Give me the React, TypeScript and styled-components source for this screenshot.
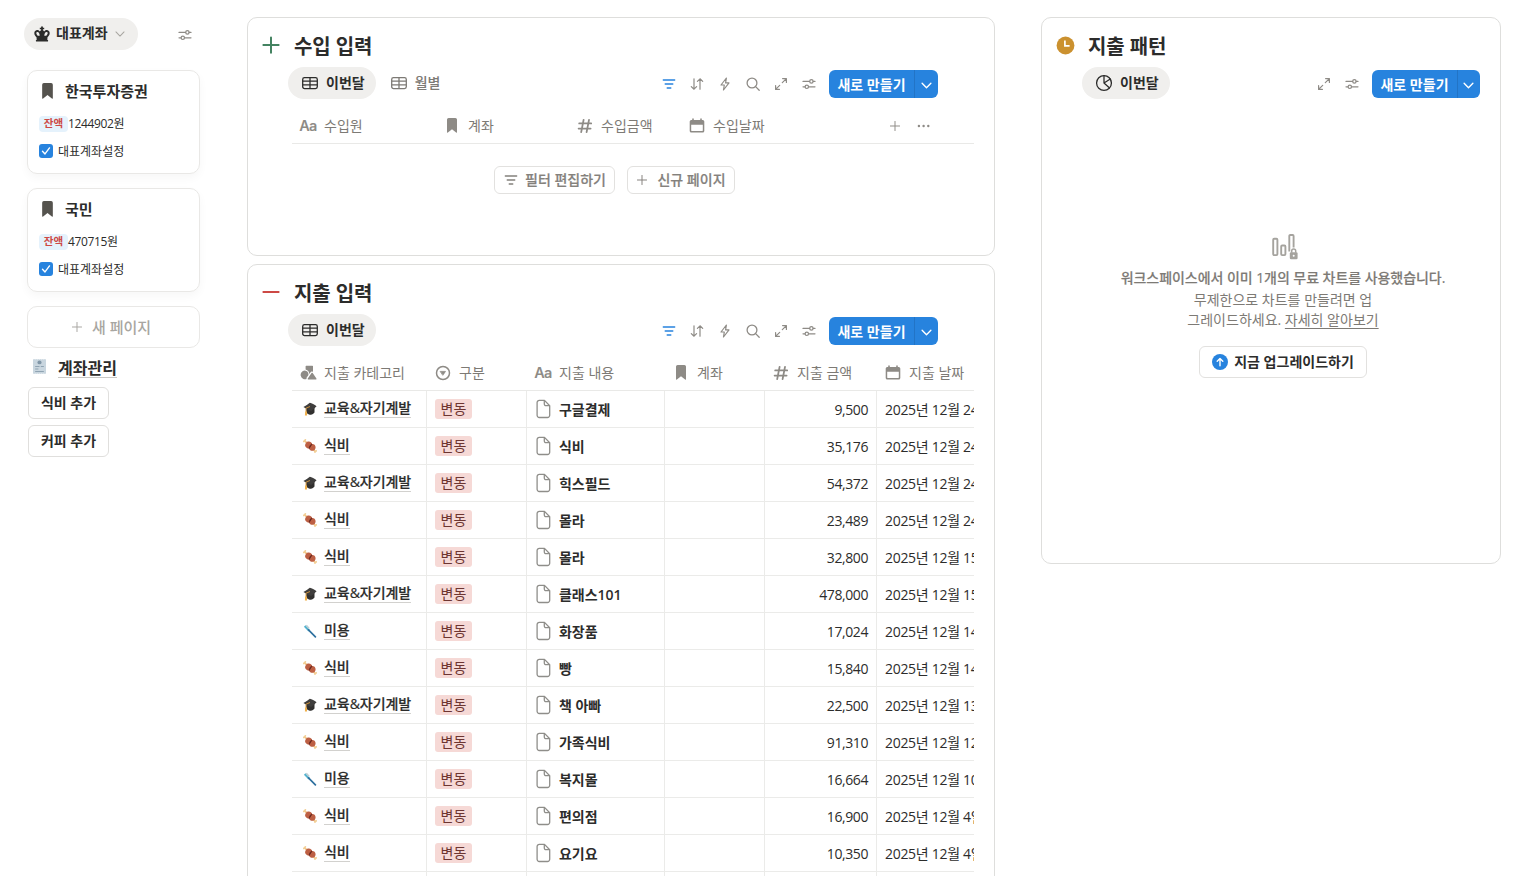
import React from 'react';
import styled, { createGlobalStyle } from 'styled-components';

const GlobalStyle = createGlobalStyle`
  * { box-sizing: border-box; }
  html, body { margin: 0; background: #fff; overflow: hidden; }
  body {
    font-family: "Open Sans", "Noto Sans CJK KR", sans-serif;
    font-size: 14px;
    line-height: 20px;
    color: #2c2c2b;
  }
  svg { display: block; flex: none; }
`;

const GREY = '#8e8b86';
const BLUE = '#2783de';

/* ---------- layout ---------- */

const Page = styled.div`
  display: flex;
  align-items: flex-start;
  width: 1525px;
  height: 876px;
  padding: 17px 24px 0;
  overflow: hidden;
`;

const Sidebar = styled.aside`
  width: 177px;
  margin-right: 46px;
  flex: none;
`;

const Center = styled.main`
  width: 748px;
  margin-right: 46px;
  flex: none;
`;

const Panel = styled.section<{ $h: number; $w?: number }>`
  width: ${(p) => (p.$w ? `${p.$w}px` : '100%')};
  height: ${(p) => p.$h}px;
  margin-bottom: 8px;
  border: 1px solid #dededc;
  border-radius: 10px;
  flex: none;
  overflow: hidden;
`;

const PanelTitle = styled.h2<{ $left: number }>`
  display: flex;
  align-items: center;
  gap: 13px;
  height: 49px;
  margin: 0;
  padding: 6px 0 0 ${(p) => p.$left}px;
  font-size: 20px;
  line-height: 26px;
  font-weight: 700;
  letter-spacing: -0.1px;
  span { padding-top: 3px; }
  svg { margin-bottom: 1px; }
`;

const Toolbar = styled.div<{ $right: number }>`
  display: flex;
  align-items: center;
  height: 32px;
  padding: 0 ${(p) => p.$right}px 0 40px;
`;

const Tab = styled.button<{ $active?: boolean }>`
  display: flex;
  align-items: center;
  gap: 7px;
  height: 32px;
  margin-right: 1px;
  padding: 0 11px 0 13px;
  border: 0;
  border-radius: 16px;
  background: ${(p) => (p.$active ? '#f0efed' : 'transparent')};
  color: ${(p) => (p.$active ? '#2c2c2b' : '#7d7a75')};
  font: ${(p) => (p.$active ? 600 : 500)} 14px/20px "Open Sans", "Noto Sans CJK KR", sans-serif;
`;

const Actions = styled.div`
  display: flex;
  align-items: center;
  gap: 12px;
  margin-left: auto;
  padding-top: 2px;
  color: ${GREY};
`;

const NewButton = styled.button`
  display: flex;
  align-items: center;
  height: 28px;
  padding: 0;
  border: 0;
  border-radius: 6px;
  background: ${BLUE};
  color: #fff;
  font: 600 14px/29px "Open Sans", "Noto Sans CJK KR", sans-serif;
  overflow: hidden;
`;

const NewLabel = styled.span`
  width: 86px;
  height: 28px;
  text-align: center;
  border-right: 1px solid #2274c6;
`;

const NewArrow = styled.span<{ $w: number }>`
  display: flex;
  justify-content: center;
  align-items: center;
  width: ${(p) => p.$w}px;
  height: 28px;
  padding: 2px 1px 0 0;
`;

/* ---------- table ---------- */

const TableBox = styled.div`
  width: 682px;
  margin: 9px 0 0 44px;
  overflow: hidden;
`;

const HeadRow = styled.div<{ $cols: string }>`
  display: grid;
  grid-template-columns: ${(p) => p.$cols};
  width: 720px;
  height: 36px;
  border-bottom: 1px solid #e9e9e7;
`;

const HeadCell = styled.div`
  display: flex;
  align-items: center;
  gap: 8px;
  padding: 0 0 0 8px;
  color: #7d7a75;
  white-space: nowrap;
  svg { color: ${GREY}; }
`;

const IconSlot = styled.span`
  display: flex;
  justify-content: center;
  width: 16px;
  flex: none;
`;

const EmojiSlot = styled(IconSlot)`
  width: 14px;
  margin-left: 3px;
`;

const Row = styled.div<{ $cols: string }>`
  display: grid;
  grid-template-columns: ${(p) => p.$cols};
  width: 720px;
  height: 37px;
  border-bottom: 1px solid #ebebe9;
`;

const Cell = styled.div`
  display: flex;
  align-items: center;
  padding: 0 8px;
  border-right: 1px solid #ebebe9;
  white-space: nowrap;
`;

const CategoryLink = styled.span`
  margin: 0 0 1px 7px;
  height: 19px;
  line-height: 18px;
  font-weight: 500;
  letter-spacing: -0.05px;
  -webkit-text-stroke: 0.2px #2c2c2b;
  border-bottom: 1px solid #d2d1ce;
`;

const Tag = styled.span`
  height: 20px;
  padding: 0 5.6px;
  border-radius: 3px;
  background: #f6d9d6;
  color: #6d3531;
  line-height: 19px;
`;

const PageName = styled.span`
  margin: 2px 0 0 7px;
  font-weight: 600;
  letter-spacing: -0.05px;
`;

const Amount = styled(Cell)`
  justify-content: flex-end;
  padding-top: 2px;
  letter-spacing: -0.42px;
`;

const DateCell = styled(Cell)`
  border-right: 0;
  padding-top: 2px;
  letter-spacing: -0.3px;
`;

const EmptyActions = styled.div`
  display: flex;
  justify-content: center;
  gap: 12px;
  padding: 22px 13px 0 0;
`;

const GhostButton = styled.button<{ $w: number; $gap: number }>`
  display: flex;
  align-items: center;
  justify-content: center;
  gap: ${(p) => p.$gap}px;
  width: ${(p) => p.$w}px;
  height: 28px;
  padding: 0 0 1px;
  border: 1px solid #e2e1df;
  border-radius: 6px;
  background: #fff;
  color: #84817c;
  -webkit-text-stroke: 0.2px #84817c;
  font: 500 14px/20px "Open Sans", "Noto Sans CJK KR", sans-serif;
`;

/* ---------- sidebar ---------- */

const SideTop = styled.div`
  display: flex;
  align-items: center;
  justify-content: space-between;
  height: 32px;
  margin: 1px 0 20px;
  padding-right: 8px;
  color: ${GREY};
  > svg { margin-top: 2px; }
`;

const AccountPill = styled.button`
  display: flex;
  align-items: center;
  width: 114px;
  height: 32px;
  padding: 0 0 0 10px;
  border: 0;
  border-radius: 16px;
  background: #f0efed;
  color: #2c2c2b;
  font: 600 14px/20px "Open Sans", "Noto Sans CJK KR", sans-serif;
  span { margin: 0 6px 2px 6px; }
`;

const Card = styled.article`
  width: 173px;
  height: 104px;
  margin: 0 0 14px 3px;
  padding: 10px 0 0 12px;
  border: 1px solid #e9e8e6;
  border-radius: 10px;
  box-shadow: 0 4px 10px rgba(25, 25, 25, 0.035);
`;

const CardTitle = styled.div`
  display: flex;
  align-items: center;
  gap: 12px;
  height: 20px;
  padding-left: 2px;
  font-size: 15px;
  font-weight: 600;
  color: #2c2c2b;
  svg { color: #55534e; }
`;

const Balance = styled.div`
  display: flex;
  align-items: center;
  margin-top: 14px;
  height: 18px;
  margin-left: -1px;
  font-size: 12px;
  letter-spacing: -0.35px;
`;

const BalanceTag = styled.span`
  width: 29px;
  height: 16px;
  border-radius: 4px;
  background: #e5f2fc;
  color: #cd4945;
  font-size: 10.5px;
  line-height: 15px;
  font-weight: 600;
  letter-spacing: 0.2px;
  text-align: center;
`;

const CheckRow = styled.div`
  display: flex;
  align-items: center;
  gap: 5px;
  margin: 9px 0 0 -1px;
  height: 20px;
  font-size: 12px;
  svg { margin-bottom: 2px; }
`;

const AddPage = styled.button`
  display: flex;
  align-items: center;
  justify-content: center;
  gap: 9px;
  width: 173px;
  height: 42px;
  margin: 0 0 0 3px;
  padding: 0 5px 0 0;
  border: 1px solid #e9e8e6;
  border-radius: 10px;
  background: #fff;
  color: #a8a6a1;
  font: 500 15px/20px "Open Sans", "Noto Sans CJK KR", sans-serif;
`;

const ManageLink = styled.div`
  display: flex;
  align-items: center;
  gap: 12px;
  height: 22px;
  margin: 9px 0 8px 9px;
  font-size: 16px;
  font-weight: 600;
  span { height: 20px; line-height: 21px; border-bottom: 1px solid #c9c8c5; }
  svg { margin-bottom: 3px; }
`;

const SideButton = styled.button`
  display: block;
  width: 81px;
  height: 32px;
  margin: 0 0 6px 4px;
  padding: 0 0 1px;
  border: 1px solid #e0dfdd;
  border-radius: 6px;
  background: #fff;
  color: #2c2c2b;
  font: 600 14px/20px "Open Sans", "Noto Sans CJK KR", sans-serif;
`;

/* ---------- chart notice ---------- */

const Notice = styled.div`
  display: flex;
  flex-direction: column;
  align-items: center;
  padding: 135px 0 0 24px;
  color: #7d7a75;
  text-align: center;
  > svg { margin-left: 3px; }
`;

const NoticeTitle = styled.div`
  margin-top: 7px;
  font-weight: 500;
  -webkit-text-stroke: 0.15px #7d7a75;
  letter-spacing: -0.05px;
  line-height: 22px;
  white-space: nowrap;
`;

const NoticeBody = styled.div`
  margin-top: 1px;
  line-height: 20px;
  white-space: nowrap;
  u { text-underline-offset: 3px; text-decoration-thickness: 1px; }
`;

const Upgrade = styled.button`
  display: flex;
  align-items: center;
  justify-content: center;
  gap: 6px;
  width: 168px;
  height: 32px;
  margin-top: 16px;
  padding: 0;
  border: 1px solid #e2e1df;
  border-radius: 6px;
  background: #fff;
  color: #2c2c2b;
  font: 600 14px/20px "Open Sans", "Noto Sans CJK KR", sans-serif;
`;

/* ---------- icons ---------- */

type IconProps = { size?: number; color?: string; children?: React.ReactNode; sw?: number };

const Line = ({ size = 16, color = 'currentColor', sw = 1.2, children }: IconProps) => (
  <svg width={size} height={size} viewBox="0 0 16 16" fill="none" stroke={color} strokeWidth={sw} strokeLinecap="round" strokeLinejoin="round">
    {children}
  </svg>
);

const FilterIcon = ({ color, size, sw = 1.4 }: IconProps) => (
  <Line color={color} size={size} sw={sw}><path d="M2.3 4h11.4M4.2 8h7.6M6.2 12h3.6" /></Line>
);
const SortIcon = () => (
  <Line><path d="M5 2.8v10.4M2.3 10.6 5 13.2l2.6-2.6M11 13.2V2.8M8.4 5.4 11 2.8l2.7 2.6" /></Line>
);
const BoltIcon = () => (
  <Line><path d="M9.4 2 4 9h3.3L6.5 14 12 6.9H8.6z" /></Line>
);
const SearchIcon = () => (
  <Line sw={1.3}><circle cx="7" cy="7" r="4.9" /><path d="m10.6 10.6 3.6 3.6" /></Line>
);
const ExpandIcon = () => (
  <Line><path d="M9.6 2.6h3.8v3.8M13.2 2.8 9.3 6.7M6.4 13.4H2.6V9.6M2.8 13.2l3.9-3.9" /></Line>
);
const SlidersIcon = () => (
  <Line><path d="M2 5.4h6.6M12.2 5.4H14M2 10.8h2M7.6 10.8H14" /><circle cx="10.4" cy="5.4" r="1.7" /><circle cx="5.8" cy="10.8" r="1.7" /></Line>
);
const ChevronIcon = ({ color, size = 14, sw = 1.4 }: IconProps) => (
  <Line color={color} size={size} sw={sw}><path d="m2.6 5.3 5.4 5.4 5.4-5.4" /></Line>
);
const PlusIcon = ({ color, size = 14, sw = 1.3 }: IconProps) => (
  <Line color={color} size={size} sw={sw}><path d="M8 1.9v12.2M1.9 8h12.2" /></Line>
);
const DotsIcon = () => (
  <svg width="16" height="16" viewBox="0 0 16 16" fill="currentColor">
    <circle cx="1.9" cy="8" r="1.2" /><circle cx="6.6" cy="8" r="1.2" /><circle cx="11.3" cy="8" r="1.2" />
  </svg>
);
const TableIcon = () => (
  <svg width="18" height="16" viewBox="0 0 18 16" fill="none" stroke="currentColor" strokeWidth="1.3">
    <rect x="1.7" y="2.6" width="14.6" height="11" rx="1.8" /><path d="M1.7 6.2h14.6M1.7 9.9h14.6M9 2.6v11" />
  </svg>
);
const PieIcon = () => (
  <Line size={18} sw={1.15}><circle cx="8" cy="8" r="6.6" /><path d="M8 1.4V8l4.7 4.2M8 8l5.6-3.6" /></Line>
);
const BookmarkIcon = ({ w = 10, h = 15 }: { w?: number; h?: number }) => (
  <svg width={w} height={h} viewBox="0 0 10 15" fill="currentColor">
    <path d="M1.6 0h6.8A1.6 1.6 0 0 1 10 1.6V14.2c0 .5-.5.7-.9.4L5 11.3.9 14.6c-.4.3-.9.1-.9-.4V1.6A1.6 1.6 0 0 1 1.6 0z" />
  </svg>
);
const HashIcon = () => (
  <Line sw={1.8}><path d="M6.6 1.8 4.2 14.2M12 1.8 9.6 14.2M2.2 5.4h12M1.6 10.6h12" /></Line>
);
const CalendarIcon = () => (
  <svg width="16" height="16" viewBox="0 0 16 16" fill="currentColor">
    <path fillRule="evenodd" d="M3.2.6h1.6V2h6.4V.6h1.6V2h.9A1.6 1.6 0 0 1 15.3 3.6v9.3a1.6 1.6 0 0 1-1.6 1.6H2.3A1.6 1.6 0 0 1 .7 12.9V3.600A1.600 1.600 0 0 1 2.300 2h.9zM2.200 6.800v5.600c0 .3.2.5.5.5h10.600c.3 0 .5-.2.5-.5V6.800z" />
  </svg>
);
const AaMark = styled.span`
  font: 600 14.5px/20px Inter, "Open Sans", sans-serif;
  letter-spacing: -0.6px;
  color: ${GREY};
`;
const SelectIcon = () => (
  <Line sw={1.5}><circle cx="8" cy="8" r="6.5" /><path d="M5.500 6.400h5L8 10z" fill="currentColor" strokeWidth="0.800" /></Line>
);
const ShapesIcon = () => (
  <svg width="17" height="16" viewBox="0 0 17 16" fill="currentColor">
    <path d="M6.200.700h6.200a.6.6 0 0 1 .6.600v5.700c-.9-.7-2-.5-2.600.4L9.300 9A5 5 0 0 0 5.600 4.500V1.300a.6.6 0 0 1 .6-.6z" />
    <path d="M4.700 5.400A4.400 4.400 0 0 1 8.500 9.900L6.700 12.600c-.3.500-.3.900-.1 1.300A4.400 4.400 0 1 1 4.700 5.400z" />
    <path d="M11.500 8c.3-.5.9-.5 1.200 0l3.700 5.600c.3.500 0 1-.6 1H8.400c-.6 0-.9-.5-.6-1z" />
  </svg>
);
const DocIcon = () => (
  <svg width="17" height="20" viewBox="0 0 17 20" fill="none" stroke="#8f8e8a" strokeWidth="1.300" strokeLinejoin="round">
    <path d="M4.300 1.400h5.200l5.200 5.300v9.600a2.200 2.200 0 0 1-2.200 2.200H4.300a2.200 2.200 0 0 1-2.200-2.200V3.600a2.200 2.200 0 0 1 2.200-2.200z" />
    <path d="M9.300 1.600v3.500a1.600 1.600 0 0 0 1.600 1.600h3.600" />
  </svg>
);
const CrownIcon = () => (
  <svg width="16" height="16" viewBox="0 0 16 16" fill="#2c2c2b">
    <path fillRule="evenodd" d="M7.100.5h1.800v1.200h1.300v1.600H8.900v1c.7.200 1.100.7 1.200 1.300.6-1.100 1.500-1.700 2.600-1.700 1.700 0 3 1.300 3 3.100 0 2-1.200 3.400-2.300 4.500v1.400H2.600v-1.400C1.500 10.400.3 9 .3 7c0-1.800 1.300-3.100 3-3.100 1.100 0 2 .6 2.600 1.700.1-.6.5-1.100 1.200-1.300v-1H5.800V1.700h1.300zM3.500 5.900c-.7 0-1.200.5-1.200 1.200 0 1.100.8 2 1.500 2.700h1.900c0-1.900-.8-3.900-2.200-3.900zm9 0c-1.400 0-2.200 2-2.200 3.900h1.900c.7-.7 1.500-1.600 1.500-2.700 0-.7-.5-1.200-1.200-1.200z" />
    <path d="M3.600 12.500h8.800l1.400 1.500c.7.800.4 1.500-.5 1.500H2.700c-.9 0-1.200-.7-.5-1.500z" />
  </svg>
);
const CheckIcon = () => (
  <svg width="14" height="14" viewBox="0 0 14 14">
    <rect width="14" height="14" rx="3" fill={BLUE} />
    <path d="m3.500 7.300 2.500 2.600 4.500-6" fill="none" stroke="#fff" strokeWidth="1.400" strokeLinecap="round" strokeLinejoin="round" />
  </svg>
);
const ReceiptIcon = () => (
  <svg width="13" height="15" viewBox="0 0 12 15" preserveAspectRatio="none">
    <path d="M0 .6 1 0l1 .6L3 0l1 .6L5 0l1 .6L7 0l1 .6L9 0l1 .6L11 0l1 .6v13.800l-1 .6-1-.6-1 .6-1-.6-1 .6-1-.6-1 .6-1-.6-1 .6-1-.6-1 .6-1-.6z" fill="#c9d6df" />
    <circle cx="6" cy="3.400" r="1.900" fill="#8197a8" />
    <path d="M2 7.500h4M7.200 7.500H10M2 10h3M2 12.500h8" stroke="#8fa3b2" strokeWidth="1.200" />
  </svg>
);
const ClockIcon = () => (
  <svg width="19" height="19" viewBox="0 0 19 19">
    <circle cx="9.500" cy="9.500" r="8.900" fill="#cb912f" />
    <path d="M8.900 4.600v5.300h4.700" fill="none" stroke="#fff" strokeWidth="1.700" />
  </svg>
);
const CapIcon = () => (
  <svg width="14" height="14" viewBox="0 0 14 14">
    <path d="M3.200 6v4.200C4.500 12 6.400 12.800 7.800 12.800c1.500-.2 2.900-1 3.700-2.200V5.500z" fill="#31302f" />
    <path d="M.4 4.900C2.800 3.700 5 2.200 6.800.8c2 .6 4.600 1.800 6.800 3.400C12 6 10 7.600 8.200 9 5.600 8 3 6.500.4 4.900z" fill="#3f3e3d" />
    <path d="M7 4.500 3 6.200v5" fill="none" stroke="#d9973a" strokeWidth="0.900" />
    <path d="M2.200 9.600h1.700l.2 3.900H1.900z" fill="#f0b04a" />
  </svg>
);
const MeatIcon = () => (
  <svg width="14" height="14" viewBox="0 0 14 14">
    <path d="m1.300 1.500 11.400 11.300" stroke="#f2c88c" strokeWidth="1.800" />
    <path d="M.2 2.900 2.900.3M11.400 13.600l2.400-2.300" stroke="#f2cf96" strokeWidth="1.500" />
    <path d="M3 3.900C4.200 2.300 6.700 2.100 8.200 3.500c.6.500.9 1 .9 1.600 1.400-.2 2.800.7 3.300 2.100.6 1.800-.2 3.700-1.800 4.400-1.500.6-3.300.2-4.100-1.100-.2-.3-.3-.7-.3-1C4.200 9.400 2.600 8.500 2.200 6.900c-.3-1 .1-2.100.8-3z" fill="#bd5f43" />
    <path d="M9 5C7.700 5.900 6.700 7.300 6.100 9.500" stroke="#6f2b22" strokeWidth="1.300" />
  </svg>
);
const BrushIcon = () => (
  <svg width="14" height="14" viewBox="0 0 14 14">
    <path d="m1.700 2 4.500 4.700" stroke="#55b3cf" strokeWidth="2.200" />
    <path d="m5.500 5.800 6.900 7" stroke="#2f719f" strokeWidth="1.700" strokeLinecap="round" />
    <path d="m3.300 1.300 2.900 3.100" stroke="#bccdd3" strokeWidth="1.500" />
  </svg>
);
const ChartLockIcon = () => (
  <svg width="26" height="26" viewBox="0 0 26 26" fill="none" stroke="#a5a39e" strokeWidth="1.900">
    <rect x="1.200" y="4.800" width="4.200" height="16.300" rx="1" />
    <rect x="9.200" y="11.500" width="4.200" height="9.600" rx="1" />
    <path d="M17.300 17.500V2a1 1 0 0 1 1-1h2.300a1 1 0 0 1 1 1v11.500" />
    <path d="M19.700 18.700v-1.800a2 2 0 0 1 4 0v1.800" strokeWidth="1.500" />
    <rect x="17.800" y="18.200" width="7.800" height="7" rx="1.300" fill="#a5a39e" stroke="none" />
    <circle cx="21.700" cy="21.700" r="1" fill="#fff" stroke="none" />
  </svg>
);
const UpIcon = () => (
  <svg width="16" height="16" viewBox="0 0 16 16">
    <circle cx="8" cy="8" r="8" fill={BLUE} />
    <path d="M8 11.800V4.600M5.200 7.200 8 4.400l2.800 2.800" fill="none" stroke="#fff" strokeWidth="1.400" strokeLinecap="round" strokeLinejoin="round" />
  </svg>
);

/* ---------- data ---------- */

type Category = 'edu' | 'food' | 'beauty';

const categories: Record<Category, { label: string; icon: React.ReactNode }> = {
  edu: { label: '교육&자기계발', icon: <CapIcon /> },
  food: { label: '식비', icon: <MeatIcon /> },
  beauty: { label: '미용', icon: <BrushIcon /> },
};

const expenses: [Category, string, string, string][] = [
  ['edu', '구글결제', '9,500', '2025년 12월 24일'],
  ['food', '식비', '35,176', '2025년 12월 24일'],
  ['edu', '힉스필드', '54,372', '2025년 12월 24일'],
  ['food', '몰라', '23,489', '2025년 12월 24일'],
  ['food', '몰라', '32,800', '2025년 12월 15일'],
  ['edu', '클래스101', '478,000', '2025년 12월 15일'],
  ['beauty', '화장품', '17,024', '2025년 12월 14일'],
  ['food', '빵', '15,840', '2025년 12월 14일'],
  ['edu', '책 아빠', '22,500', '2025년 12월 13일'],
  ['food', '가족식비', '91,310', '2025년 12월 12일'],
  ['beauty', '복지몰', '16,664', '2025년 12월 10일'],
  ['food', '편의점', '16,900', '2025년 12월 4일'],
  ['food', '요기요', '10,350', '2025년 12월 4일'],
];

const INCOME_COLS = '144px 133px 112px 200px 28px 28px 1fr';
const EXPENSE_COLS = '135px 100px 138px 100px 112px 1fr';

const Create = ({ arrow = 23 }: { arrow?: number }) => (
  <NewButton>
    <NewLabel>새로 만들기</NewLabel>
    <NewArrow $w={arrow}><ChevronIcon size={13} sw={1.7} /></NewArrow>
  </NewButton>
);

const Tools = ({ full }: { full?: boolean }) => (
  <Actions>
    {full && (
      <>
        <FilterIcon color={BLUE} />
        <SortIcon />
        <BoltIcon />
        <SearchIcon />
      </>
    )}
    <ExpandIcon />
    <SlidersIcon />
    <Create arrow={full ? 23 : 22} />
  </Actions>
);

const Head = ({ icon, children }: { icon: React.ReactNode; children: React.ReactNode }) => (
  <HeadCell><IconSlot>{icon}</IconSlot>{children}</HeadCell>
);

const Account = ({ name, balance }: { name: string; balance: string }) => (
  <Card>
    <CardTitle><BookmarkIcon w={11} h={16} />{name}</CardTitle>
    <Balance><BalanceTag>잔액</BalanceTag>{balance}</Balance>
    <CheckRow><CheckIcon />대표계좌설정</CheckRow>
  </Card>
);

export default function App() {
  return (
    <>
      <GlobalStyle />
      <Page>
        <Sidebar>
          <SideTop>
            <AccountPill><CrownIcon /><span>대표계좌</span><ChevronIcon size={12} color="#a8a6a1" /></AccountPill>
            <SlidersIcon />
          </SideTop>
          <Account name="한국투자증권" balance="1244902원" />
          <Account name="국민" balance="470715원" />
          <AddPage><PlusIcon size={12} />새 페이지</AddPage>
          <ManageLink><ReceiptIcon /><span>계좌관리</span></ManageLink>
          <SideButton>식비 추가</SideButton>
          <SideButton>커피 추가</SideButton>
        </Sidebar>

        <Center>
          <Panel $h={239}>
            <PanelTitle $left={13}>
              <PlusIcon size={20} color="#448361" sw={1.6} /><span>수입 입력</span>
            </PanelTitle>
            <Toolbar $right={56}>
              <Tab $active><TableIcon />이번달</Tab>
              <Tab><TableIcon />월별</Tab>
              <Tools full />
            </Toolbar>
            <TableBox>
              <HeadRow $cols={INCOME_COLS}>
                <Head icon={<AaMark>Aa</AaMark>}>수입원</Head>
                <Head icon={<BookmarkIcon />}>계좌</Head>
                <Head icon={<HashIcon />}>수입금액</Head>
                <Head icon={<CalendarIcon />}>수입날짜</Head>
                <HeadCell><PlusIcon size={12} /></HeadCell>
                <HeadCell><DotsIcon /></HeadCell>
              </HeadRow>
            </TableBox>
            <EmptyActions>
              <GhostButton $w={121} $gap={6}><FilterIcon sw={1.3} />필터 편집하기</GhostButton>
              <GhostButton $w={108} $gap={9}><PlusIcon size={12} />신규 페이지</GhostButton>
            </EmptyActions>
          </Panel>

          <Panel $h={640}>
            <PanelTitle $left={13}>
              <Line size={20} color="#cd4945" sw={1.6}><path d="M1.9 8h12.2" /></Line><span>지출 입력</span>
            </PanelTitle>
            <Toolbar $right={56}>
              <Tab $active><TableIcon />이번달</Tab>
              <Tools full />
            </Toolbar>
            <TableBox>
              <HeadRow $cols={EXPENSE_COLS}>
                <Head icon={<ShapesIcon />}>지출 카테고리</Head>
                <Head icon={<SelectIcon />}>구분</Head>
                <Head icon={<AaMark>Aa</AaMark>}>지출 내용</Head>
                <Head icon={<BookmarkIcon />}>계좌</Head>
                <Head icon={<HashIcon />}>지출 금액</Head>
                <Head icon={<CalendarIcon />}>지출 날짜</Head>
              </HeadRow>
              {expenses.map(([cat, name, amount, date], i) => (
                <Row key={i} $cols={EXPENSE_COLS}>
                  <Cell>
                    <EmojiSlot>{categories[cat].icon}</EmojiSlot>
                    <CategoryLink>{categories[cat].label}</CategoryLink>
                  </Cell>
                  <Cell><Tag>변동</Tag></Cell>
                  <Cell><DocIcon /><PageName>{name}</PageName></Cell>
                  <Cell />
                  <Amount>{amount}</Amount>
                  <DateCell>{date}</DateCell>
                </Row>
              ))}
              <Row $cols={EXPENSE_COLS}>
                <Cell /><Cell /><Cell /><Cell /><Cell />
              </Row>
            </TableBox>
          </Panel>
        </Center>

        <Panel $h={547} $w={460}>
          <PanelTitle $left={14}>
            <ClockIcon /><span>지출 패턴</span>
          </PanelTitle>
          <Toolbar $right={20}>
            <Tab $active><PieIcon />이번달</Tab>
            <Tools />
          </Toolbar>
          <Notice>
            <ChartLockIcon />
            <NoticeTitle>워크스페이스에서 이미 1개의 무료 차트를 사용했습니다.</NoticeTitle>
            <NoticeBody>
              무제한으로 차트를 만들려면 업<br />그레이드하세요. <u>자세히 알아보기</u>
            </NoticeBody>
            <Upgrade><UpIcon />지금 업그레이드하기</Upgrade>
          </Notice>
        </Panel>
      </Page>
    </>
  );
}
